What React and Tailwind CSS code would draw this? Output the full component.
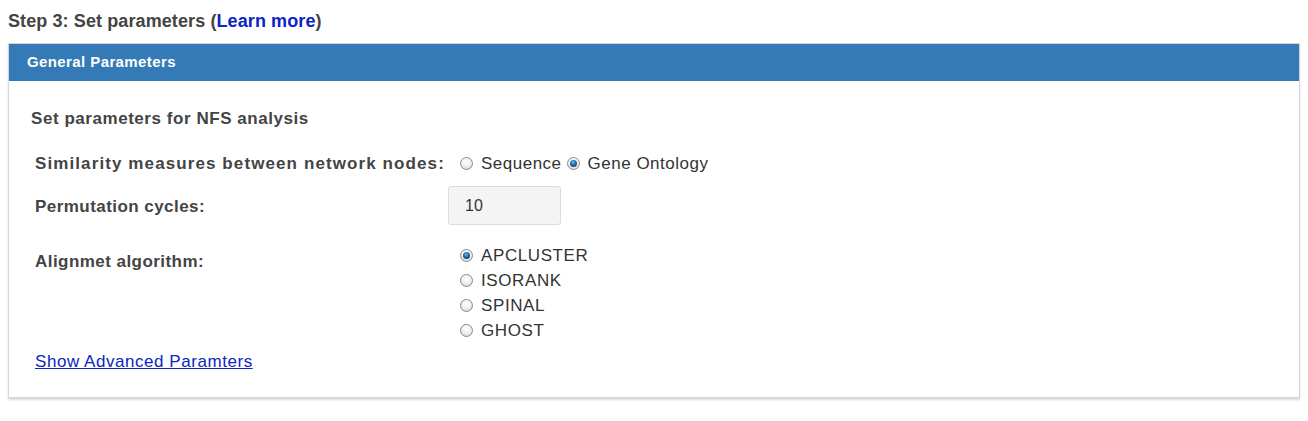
import React from 'react';

const Radio = ({ checked }) => (
  <span className="relative inline-block w-[13px] h-[13px] rounded-full border border-[#8a8a8a] bg-[radial-gradient(circle_at_50%_35%,#ffffff_0%,#f2f2f2_45%,#cdcdcd_100%)] shrink-0">
    {checked && (
      <span className="absolute left-[2px] top-[2px] w-[7px] h-[7px] rounded-full bg-[radial-gradient(circle_at_45%_35%,#6ab8ee_0%,#1a6aa8_45%,#062a4d_100%)]" />
    )}
  </span>
);

const RadioOption = ({ label, checked }) => (
  <label className="flex items-center gap-[8px] h-[25px] text-[17px] tracking-[0.6px] text-[#333]">
    <Radio checked={checked} />
    <span>{label}</span>
  </label>
);

export default function App() {
  return (
    <div className="min-h-screen bg-white px-[8px] font-['Liberation_Sans',Arial,sans-serif]">
      <h2 className="pt-[10px] text-[18px] leading-[22px] font-bold tracking-[0.1px] text-[#444]">
        Step 3: Set parameters (<a href="#" className="text-[#0b24c4]">Learn more</a>)
      </h2>

      <div className="mt-[11px] border border-[#d6d6d6] shadow-[0_2px_2px_rgba(0,0,0,0.15)]">
        <div className="h-[37px] bg-[#337ab7] px-[18px] flex items-center text-[15px] tracking-[0.4px] font-bold text-white">
          General Parameters
        </div>

        <div className="pl-[22px] pt-[28px] pb-[25px] text-[#444]">
          <div className="text-[17px] leading-[20px] tracking-[0.55px] font-bold">Set parameters for NFS analysis</div>

          <div className="pl-[4px]">
            <div className="mt-[22px] grid grid-cols-[413px_1fr] items-center h-[20px]">
              <div className="text-[17px] tracking-[1.1px] font-bold">Similarity measures between network nodes:</div>
              <div className="flex items-center pl-[12px] text-[17px] tracking-[0.5px] text-[#333]">
                <span className="flex items-center gap-[8px]">
                  <Radio />
                  <span>Sequence</span>
                </span>
                <span className="flex items-center gap-[8px] ml-[5px]">
                  <Radio checked />
                  <span>Gene Ontology</span>
                </span>
              </div>
            </div>

            <div className="mt-[15px] grid grid-cols-[413px_1fr] items-center h-[39px]">
              <div className="pt-[3px] text-[17px] tracking-[0.45px] font-bold">Permutation cycles:</div>
              <div>
                <div className="w-[113px] h-[39px] bg-[#f4f4f4] border border-[#dcdcdc] rounded-[3px] flex items-center px-[16px] text-[16px] text-[#333]">
                  10
                </div>
              </div>
            </div>

            <div className="mt-[18px] grid grid-cols-[413px_1fr]">
              <div className="pt-[9px] text-[17px] leading-[20px] tracking-[0.45px] font-bold">Alignmet algorithm:</div>
              <div className="pl-[12px] flex flex-col">
                <RadioOption label="APCLUSTER" checked />
                <RadioOption label="ISORANK" />
                <RadioOption label="SPINAL" />
                <RadioOption label="GHOST" />
              </div>
            </div>

            <div className="mt-[9px] text-[17px] leading-[20px] tracking-[0.55px]">
              <a href="#" className="text-[#0b24c4] underline">Show Advanced Paramters</a>
            </div>
          </div>
        </div>
      </div>
    </div>
  );
}
